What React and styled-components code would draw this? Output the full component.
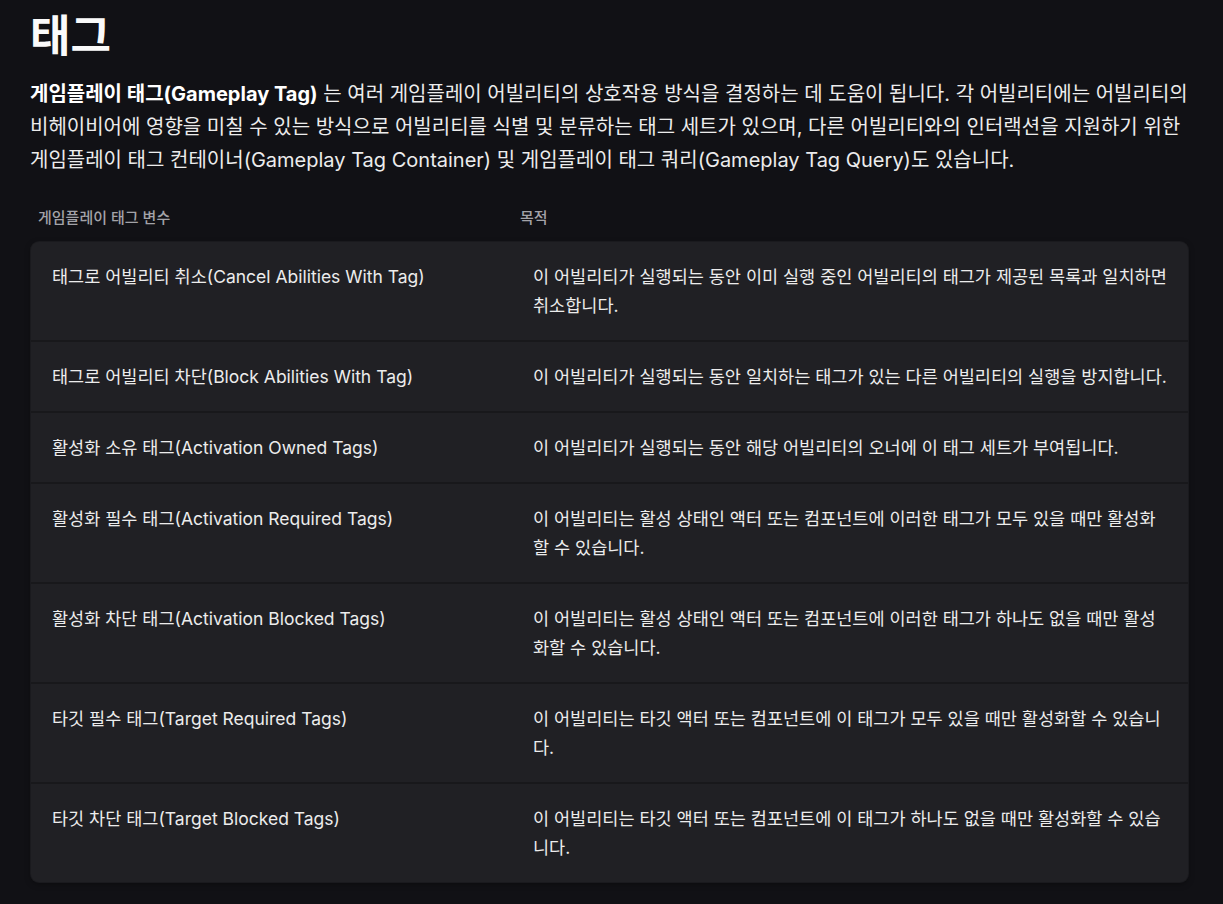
import React from 'react'
import styled, { createGlobalStyle } from 'styled-components'

const rows = [
  ['태그로 어빌리티 취소(Cancel Abilities With Tag)', '이 어빌리티가 실행되는 동안 이미 실행 중인 어빌리티의 태그가 제공된 목록과 일치하면 취소합니다.'],
  ['태그로 어빌리티 차단(Block Abilities With Tag)', '이 어빌리티가 실행되는 동안 일치하는 태그가 있는 다른 어빌리티의 실행을 방지합니다.'],
  ['활성화 소유 태그(Activation Owned Tags)', '이 어빌리티가 실행되는 동안 해당 어빌리티의 오너에 이 태그 세트가 부여됩니다.'],
  ['활성화 필수 태그(Activation Required Tags)', '이 어빌리티는 활성 상태인 액터 또는 컴포넌트에 이러한 태그가 모두 있을 때만 활성화 할 수 있습니다.'],
  ['활성화 차단 태그(Activation Blocked Tags)', '이 어빌리티는 활성 상태인 액터 또는 컴포넌트에 이러한 태그가 하나도 없을 때만 활성화할 수 있습니다.'],
  ['타깃 필수 태그(Target Required Tags)', '이 어빌리티는 타깃 액터 또는 컴포넌트에 이 태그가 모두 있을 때만 활성화할 수 있습니다.'],
  ['타깃 차단 태그(Target Blocked Tags)', '이 어빌리티는 타깃 액터 또는 컴포넌트에 이 태그가 하나도 없을 때만 활성화할 수 있습니다.'],
]

export default function App() {
  return (
    <>
      <GlobalStyle />
      <Page>
        <Title>태그</Title>
        <Intro>
          <strong>게임플레이 태그(Gameplay Tag)</strong> 는 여러 게임플레이 어빌리티의 상호작용 방식을 결정하는 데 도움이 됩니다. 각 어빌리티에는 어빌리티의 비헤이비어에 영향을 미칠 수 있는 방식으로 어빌리티를 식별 및 분류하는 태그 세트가 있으며, 다른 어빌리티와의 인터랙션을 지원하기 위한 게임플레이 태그 컨테이너(Gameplay Tag Container) 및 게임플레이 태그 쿼리(Gameplay Tag Query)도 있습니다.
        </Intro>
        <HeaderRow>
          <HeadCell>게임플레이 태그 변수</HeadCell>
          <HeadCell>목적</HeadCell>
        </HeaderRow>
        <Card>
          {rows.map(([name, desc]) => (
            <Row key={name}>
              <Cell>{name}</Cell>
              <Cell>{desc}</Cell>
            </Row>
          ))}
        </Card>
      </Page>
    </>
  )
}

const GlobalStyle = createGlobalStyle`
  html, body {
    margin: 0;
    background: #111115;
  }
  body {
    font-family: Inter, "Noto Sans CJK KR", sans-serif;
    color: #ededee;
  }
`

const Page = styled.div`
  padding: 10px 30px 20px;
  width: 1163px;
`

const Title = styled.h1`
  margin: 0 0 15px;
  font-size: 44px;
  line-height: 53px;
  font-weight: 700;
  color: #fafafa;
`

const Intro = styled.p`
  margin: 0 0 26px;
  font-size: 20px;
  line-height: 33px;
  color: #ececec;
  strong {
    font-weight: 700;
    color: #fff;
  }
`

const HeaderRow = styled.div`
  display: grid;
  grid-template-columns: 482px 1fr;
  padding: 0 8px;
  margin-bottom: 10px;
`

const HeadCell = styled.div`
  font-size: 15px;
  line-height: 29px;
  font-weight: 500;
  color: #a3a3a8;
`

const Card = styled.div`
  width: 1157px;
  margin-left: 1px;
  background: #202024;
  border-radius: 8px;
  box-shadow: 0 0 0 1px #1a1a1e, 0 2px 6px rgba(0, 0, 0, 0.35);
  overflow: hidden;
`

const Row = styled.div`
  display: grid;
  grid-template-columns: 481px 1fr;
  border-bottom: 2px solid #18181b;
  &:last-child {
    border-bottom: none;
  }
`

const Cell = styled.div`
  padding: 20px 21px;
  font-size: 17.5px;
  line-height: 29px;
  color: #ececec;
`
